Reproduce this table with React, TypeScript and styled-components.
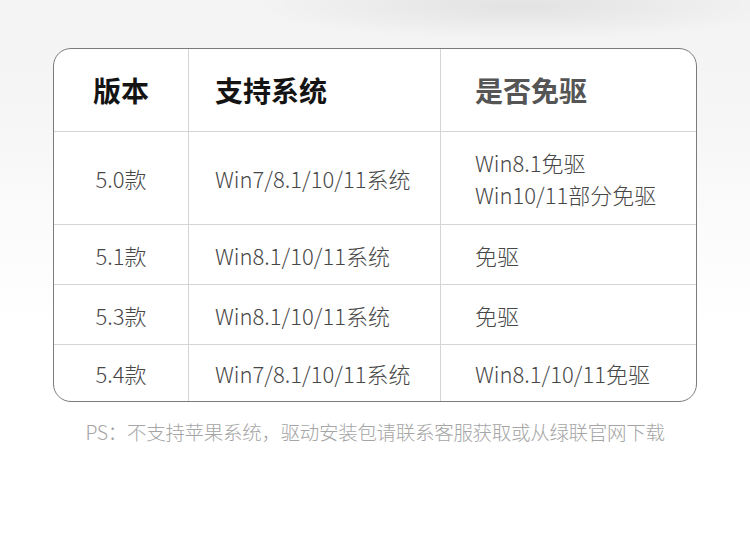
import React from 'react';
import styled, { createGlobalStyle } from 'styled-components';

const GlobalStyle = createGlobalStyle`
  html, body {
    margin: 0;
    padding: 0;
    background: #ffffff;
  }
  body {
    font-family: "Noto Sans CJK SC", "Noto Sans", sans-serif;
  }
`;

const Page = styled.div`
  width: 750px;
  height: 535px;
  box-sizing: border-box;
  padding: 48px 53px 0 53px;
  display: flex;
  flex-direction: column;
  align-items: stretch;
  background:
    radial-gradient(ellipse 260px 34px at 520px 6px, rgba(0, 0, 0, 0.07), rgba(0, 0, 0, 0) 100%),
    linear-gradient(180deg, #f3f3f3 0px, #f6f6f6 120px, #fbfbfb 220px, #ffffff 330px);
`;

const Table = styled.div`
  display: grid;
  grid-template-columns: 135px 252px 1fr;
  grid-template-rows: 83px 93px 60px 60px 1fr;
  height: 354px;
  box-sizing: border-box;
  border: 1px solid #7b7b7b;
  border-radius: 18px;
  overflow: hidden;
  background: #ffffff;
`;

const Cell = styled.div<{ $col: number; $last?: boolean; $center?: boolean; $pad?: number }>`
  display: flex;
  flex-direction: column;
  justify-content: center;
  align-items: ${(p) => (p.$center ? 'center' : 'flex-start')};
  padding-left: ${(p) => p.$pad ?? 0}px;
  box-sizing: border-box;
  border-right: ${(p) => (p.$col < 2 ? '1px solid #d4d4d4' : 'none')};
  border-bottom: ${(p) => (p.$last ? 'none' : '1px solid #d4d4d4')};
  font-size: 22px;
  font-weight: 300;
  line-height: 32px;
  color: #474747;
  white-space: nowrap;
`;

const HeadText = styled.span<{ $muted?: boolean }>`
  font-size: 28px;
  font-weight: 700;
  color: ${(p) => (p.$muted ? '#555555' : '#141414')};
`;

const Note = styled.div`
  margin-top: 16px;
  text-align: center;
  font-size: 19.5px;
  font-weight: 300;
  line-height: 28px;
  color: #a5a5a5;
  letter-spacing: -0.3px;
`;

const rows: { ver: string; sys: string; free: string[] }[] = [
  { ver: '5.0款', sys: 'Win7/8.1/10/11系统', free: ['Win8.1免驱', 'Win10/11部分免驱'] },
  { ver: '5.1款', sys: 'Win8.1/10/11系统', free: ['免驱'] },
  { ver: '5.3款', sys: 'Win8.1/10/11系统', free: ['免驱'] },
  { ver: '5.4款', sys: 'Win7/8.1/10/11系统', free: ['Win8.1/10/11免驱'] },
];

const pads = [0, 26, 34];

export default function App() {
  return (
    <>
      <GlobalStyle />
      <Page>
        <Table>
          <Cell $col={0} $center>
            <HeadText>版本</HeadText>
          </Cell>
          <Cell $col={1} $pad={pads[1]}>
            <HeadText>支持系统</HeadText>
          </Cell>
          <Cell $col={2} $pad={pads[2]}>
            <HeadText $muted>是否免驱</HeadText>
          </Cell>
          {rows.map((r, i) => {
            const last = i === rows.length - 1;
            return (
              <React.Fragment key={r.ver}>
                <Cell $col={0} $center $last={last}>{r.ver}</Cell>
                <Cell $col={1} $pad={pads[1]} $last={last}>{r.sys}</Cell>
                <Cell $col={2} $pad={pads[2]} $last={last}>
                  {r.free.map((t) => (
                    <span key={t}>{t}</span>
                  ))}
                </Cell>
              </React.Fragment>
            );
          })}
        </Table>
        <Note>PS：不支持苹果系统，驱动安装包请联系客服获取或从绿联官网下载</Note>
      </Page>
    </>
  );
}
